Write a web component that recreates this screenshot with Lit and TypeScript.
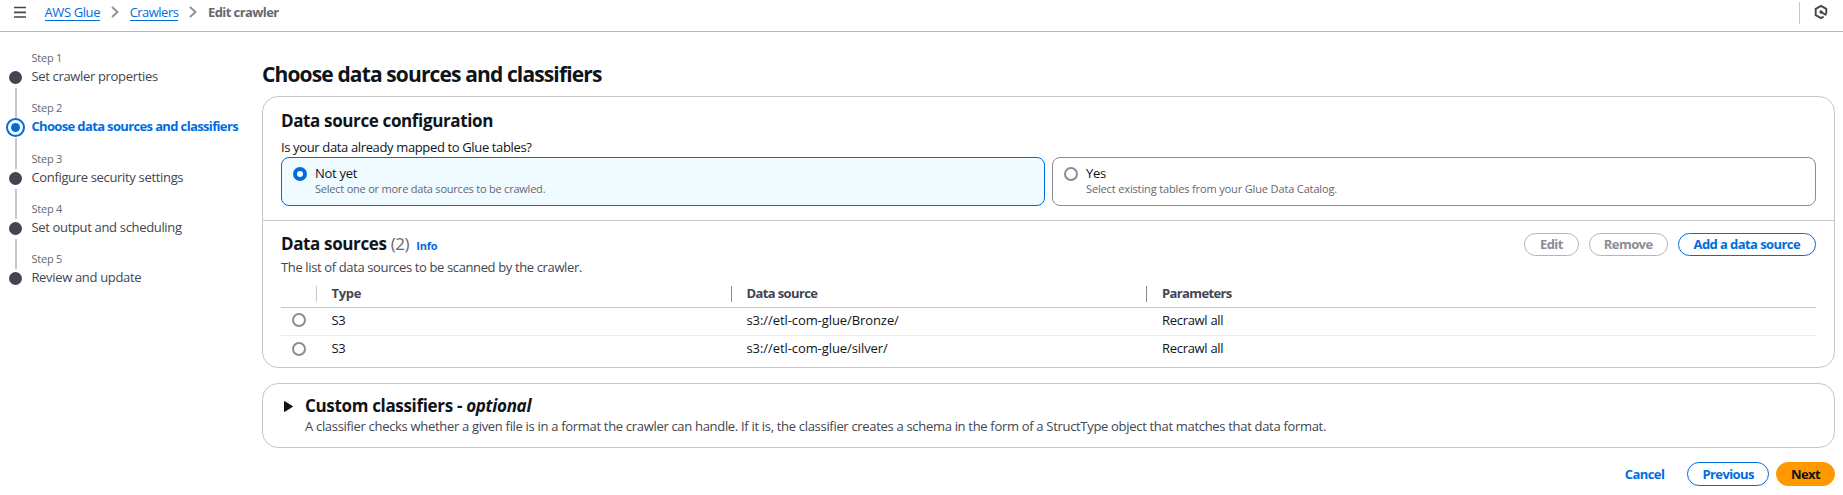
import { LitElement, html, css, svg } from "lit";
import { customElement, property } from "lit/decorators.js";
import { classMap } from "lit/directives/class-map.js";

const base = css`
  * { box-sizing: border-box; }
  .radio {
    width: 14px; height: 14px; border-radius: 50%; flex: none;
    border: 2px solid #8c8c94; background: #fff;
  }
  .radio.on { border: 4px solid #006ce0; }
`;

const steps = [
  "Set crawler properties",
  "Choose data sources and classifiers",
  "Configure security settings",
  "Set output and scheduling",
  "Review and update",
];

const sources = [
  { type: "S3", path: "s3://etl-com-glue/Bronze/", params: "Recrawl all" },
  { type: "S3", path: "s3://etl-com-glue/silver/", params: "Recrawl all" },
];

const chevron = svg`<svg width="8" height="12" viewBox="0 0 8 12" fill="none" stroke="#8c8c94" stroke-width="1.8"><path d="M1 1l5.5 5L1 11"/></svg>`;

@customElement("top-bar")
class TopBar extends LitElement {
  static styles = [base, css`
    :host { display: block; }
    .bar { display: flex; align-items: flex-start; height: 32px; border-bottom: 1px solid #b4b4bb; padding: 2px 15px 0 14px; }
    .menu { width: 12px; height: 20px; margin-right: 18.5px; }
    .crumbs { display: flex; align-items: flex-start; line-height: 20px; height: 20px; }
    .link { color: #006ce0; letter-spacing: -0.4px; border-bottom: 1px solid #006ce0; height: 19px; line-height: 20px; }
    .parent { letter-spacing: -0.52px; }
    .crumbs svg { margin: 4px 10.8px 0; }
    .here { color: #656871; font-weight: 700; letter-spacing: -0.58px; }
    .side { margin-left: auto; display: flex; height: 22px; }
    .rule { width: 1px; background: #c6c6cd; margin-right: 14px; }
    .side svg { margin-top: 2px; }
  `];
  render() {
    return html`<div class="bar">
      <svg class="menu" viewBox="0 0 12 20" stroke="#424650" stroke-width="1.7"><path d="M0 5.5h12M0 10.3h12M0 15h12"/></svg>
      <nav class="crumbs">
        <span class="link">AWS Glue</span>${chevron}<span class="link parent">Crawlers</span>${chevron}<span class="here">Edit crawler</span>
      </nav>
      <div class="side">
        <span class="rule"></span>
        <svg width="14" height="16" viewBox="0 0 14 16" fill="none" stroke="#424650" stroke-width="1.9"><path d="M12.3 9.8V4.9L7 1.9 1.7 4.9v6.2L7 14.1l2.6-1.5"/><path d="M7 8l5.4 3.1"/><circle cx="7" cy="8" r="1.2" fill="#424650" stroke-width="1"/></svg>
      </div>
    </div>`;
  }
}

@customElement("step-list")
class StepList extends LitElement {
  static styles = [base, css`
    :host { display: block; padding-top: 18px; }
    .item { display: grid; grid-template-columns: 19px 1fr; column-gap: 6.4px; height: 50.25px; padding-left: 6px; }
    .track { display: flex; flex-direction: column; align-items: center; }
    .pre { height: 18px; width: 2px; }
    .post { flex: 1; width: 2px; }
    .line { background: #c6c6cd; }
    .mark { width: 19px; height: 19px; margin: 0 0 1px; display: grid; place-items: center; }
    .dot { width: 13px; height: 13px; border-radius: 50%; background: #424650; }
    .on .mark { border: 2px solid #006ce0; border-radius: 50%; }
    .on .dot { width: 9px; height: 9px; background: #006ce0; }
    .num { font-size: 11px; line-height: 16px; color: #656871; letter-spacing: -0.2px; }
    .name { line-height: 20px; color: #424650; letter-spacing: -0.33px; white-space: nowrap; }
    .on .name { color: #006ce0; font-weight: 700; letter-spacing: -0.64px; }
  `];
  render() {
    return steps.map((s, i) => html`<div class=${classMap({ item: true, on: i === 1 })}>
      <div class="track">
        <span class=${classMap({ pre: true, line: i > 0 })}></span>
        <span class="mark"><span class="dot"></span></span>
        <span class=${classMap({ post: true, line: i < steps.length - 1 })}></span>
      </div>
      <div><div class="num">Step ${i + 1}</div><div class="name">${s}</div></div>
    </div>`);
  }
}

@customElement("pill-button")
class PillButton extends LitElement {
  @property({ reflect: true }) kind = "normal";
  static styles = [base, css`
    :host {
      box-sizing: border-box; display: inline-flex; align-items: center; justify-content: center;
      height: 23px; min-width: 55px; border: 1px solid #006ce0; border-radius: 12px; color: #006ce0;
      font-weight: 700; letter-spacing: -0.58px; line-height: 20px; padding: 0 15px 1px; white-space: nowrap;
    }
    :host([kind="disabled"]) { border-color: #b4b4bb; color: #8c8c94; padding-inline: 14px; }
    :host([kind="primary"]) { border-color: #ff9900; background: #ff9900; color: #0f141a; }
    :host([kind="link"]) { border-color: transparent; }
  `];
  render() { return html`<slot></slot>`; }
}

@customElement("source-table")
class SourceTable extends LitElement {
  static styles = [base, css`
    :host { display: block; }
    .row { display: grid; grid-template-columns: 35px 415px 415.5px 1fr; height: 28px; align-items: start; border-bottom: 1px solid #ebebf0; padding-top: 2px; line-height: 20px; }
    .row:last-child { border-bottom: 0; height: 25px; }
    .head { height: 31px; padding-top: 6px; border-bottom-color: #c6c6cd; color: #424650; font-weight: 700; }
    .cell { padding-left: 15.5px; letter-spacing: -0.3px; }
    .path { letter-spacing: -0.08px; }
    .pick { padding: 3px 0 0 11px; }
    .row:last-child .pick { padding-top: 4px; }
    .head .cell { position: relative; letter-spacing: -0.62px; }
    .head .cell::before { content: ""; position: absolute; left: 0; top: 3px; width: 1px; height: 16px; background: #8c8c94; }
    .head .cell:last-child::before { left: -0.6px; }
    .head .first { letter-spacing: -0.3px; }
    .head .first::before { background: #c6c6cd; }
  `];
  render() {
    return html`
      <div class="row head"><span></span><span class="cell first">Type</span><span class="cell">Data source</span><span class="cell">Parameters</span></div>
      ${sources.map((s) => html`<div class="row">
        <div class="pick"><div class="radio"></div></div>
        <span class="cell">${s.type}</span><span class="cell path">${s.path}</span><span class="cell">${s.params}</span>
      </div>`)}`;
  }
}

@customElement("app-root")
class AppRoot extends LitElement {
  static styles = [base, css`
    :host { display: block; height: 495px; background: #fff; color: #0f141a; font: 13px/20px "Open Sans", "Noto Sans", sans-serif; }
    .page { display: grid; grid-template-columns: 262px 1fr; padding-right: 8px; }
    .main { padding-top: 28px; min-width: 0; }
    h1, h2 { margin: 0; font-weight: 700; }
    h1 { font-size: 21px; line-height: 28px; letter-spacing: -0.87px; margin-bottom: 8px; }
    h2 { font-size: 17px; line-height: 22px; letter-spacing: -0.37px; }
    .card { border: 1px solid #c6c6cd; border-radius: 16px; }
    .config { padding: 13px 18px 14px 18px; border-bottom: 1px solid #c6c6cd; }
    .question { margin-top: 5px; letter-spacing: -0.36px; }
    .tiles { display: grid; grid-template-columns: 1fr 1fr; gap: 7px; }
    .tile { height: 49px; border: 1px solid #8c8c94; border-radius: 8px; padding: 6px 11px; display: flex; gap: 8px; }
    .tile.on { border-color: #006ce0; background: #f0fbff; }
    .tile .radio { margin-top: 3px; }
    .opt { line-height: 18px; letter-spacing: -0.3px; }
    .hint { font-size: 11px; line-height: 14px; color: #656871; letter-spacing: -0.22px; }
    .tile:not(.on) .hint { letter-spacing: -0.14px; }
    .list { height: 146px; padding: 11px 18px 0 18px; }
    .bar { display: flex; justify-content: space-between; height: 25px; }
    .bar h2 { line-height: 23px; }
    .count { font-weight: 400; color: #656871; }
    .info { font-size: 11px; font-weight: 700; color: #006ce0; margin-left: 3px; letter-spacing: -0.25px; }
    .actions { display: flex; gap: 10px; padding-top: 1px; }
    .about { color: #424650; letter-spacing: -0.37px; }
    .extra { margin-top: 15px; height: 65px; padding: 11px 21px 0; display: flex; gap: 12px; }
    .extra svg { margin-top: 6px; flex: none; }
    .extra .about { letter-spacing: -0.312px; margin-top: -1px; }
    .extra h2 { letter-spacing: -0.33px; }
    .extra em { letter-spacing: -0.3px; }
    .foot { display: flex; justify-content: flex-end; gap: 7px; margin-top: 14px; }
    .foot pill-button { height: 24px; padding-inline: 14px; }
    .foot pill-button[kind="link"] { padding-inline: 15px; }
  `];
  render() {
    return html`
      <top-bar></top-bar>
      <div class="page">
        <step-list></step-list>
        <main class="main">
          <h1>Choose data sources and classifiers</h1>
          <section class="card">
            <div class="config">
              <h2>Data source configuration</h2>
              <div class="question">Is your data already mapped to Glue tables?</div>
              <div class="tiles">
                <div class="tile on"><span class="radio on"></span><div><div class="opt">Not yet</div><div class="hint">Select one or more data sources to be crawled.</div></div></div>
                <div class="tile"><span class="radio"></span><div><div class="opt">Yes</div><div class="hint">Select existing tables from your Glue Data Catalog.</div></div></div>
              </div>
            </div>
            <div class="list">
              <div class="bar">
                <h2>Data sources <span class="count">(2)</span> <span class="info">Info</span></h2>
                <div class="actions">
                  <pill-button kind="disabled">Edit</pill-button>
                  <pill-button kind="disabled">Remove</pill-button>
                  <pill-button>Add a data source</pill-button>
                </div>
              </div>
              <div class="about">The list of data sources to be scanned by the crawler.</div>
              <source-table></source-table>
            </div>
          </section>
          <section class="card extra">
            <svg width="9" height="11" viewBox="0 0 9 11"><path d="M.5.5v10L8.5 5.5z" fill="#0f141a" stroke="#0f141a" stroke-linejoin="round"/></svg>
            <div>
              <h2>Custom classifiers - <em>optional</em></h2>
              <div class="about">A classifier checks whether a given file is in a format the crawler can handle. If it is, the classifier creates a schema in the form of a StructType object that matches that data format.</div>
            </div>
          </section>
          <div class="foot">
            <pill-button kind="link">Cancel</pill-button>
            <pill-button>Previous</pill-button>
            <pill-button kind="primary">Next</pill-button>
          </div>
        </main>
      </div>`;
  }
}
